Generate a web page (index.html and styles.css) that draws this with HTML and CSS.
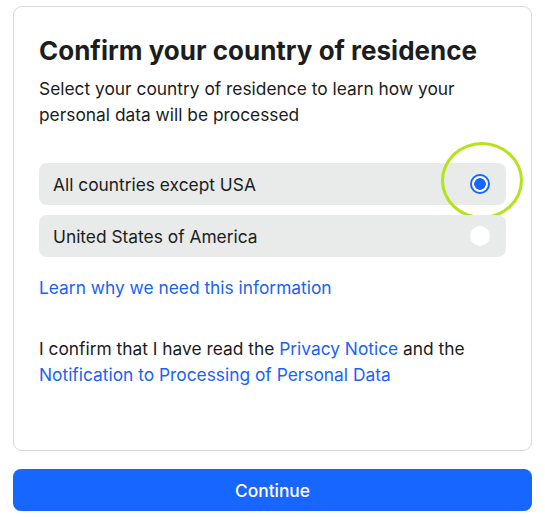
FILE: index.html
```html
<!DOCTYPE html>
<html>
<head>
<meta charset="utf-8">
<link rel="stylesheet" href="styles.css">
</head>
<body>
<div class="page">
  <div class="card">
    <h1 class="title">Confirm your country of residence</h1>
    <p class="sub">Select your country of residence to learn how your personal data will be processed</p>
    <div class="options">
      <div class="option">
        <span class="label">All countries except USA</span>
        <span class="radio checked"></span>
        <span class="highlight"></span>
      </div>
      <div class="option">
        <span class="label">United States of America</span>
        <span class="radio"></span>
      </div>
    </div>
    <a class="link learn" href="#">Learn why we need this information</a>
    <p class="confirm">I confirm that I have read the <a class="link" href="#">Privacy Notice</a> and the <a class="link" href="#">Notification to Processing of Personal Data</a></p>
  </div>
  <button class="btn">Continue</button>
</div>
</body>
</html>
```
FILE: styles.css
```css
html, body { margin: 0; padding: 0; background: #fff; }
body { font-family: Inter, "Noto Sans", sans-serif; color: #1b1d21; }
.page { padding: 6px 13px 0 13px; display: flex; flex-direction: column; gap: 18px; }
.card {
  border: 1px solid #d9dadb; border-radius: 9px; padding: 28px 25px 0 25px;
  height: 445px; box-sizing: border-box; display: flex; flex-direction: column;
}
.title { margin: 0; font-size: 26px; line-height: 32px; font-weight: 700; letter-spacing: 0; }
.sub { margin: 9px 0 0; font-size: 17.35px; line-height: 26px; }
.options { margin-top: 35px; display: flex; flex-direction: column; gap: 10px; }
.option {
  position: relative; height: 42px; background: #e9eaea; border-radius: 8px;
  display: flex; align-items: center; justify-content: space-between; padding: 0 16px 0 14px;
  font-size: 17.35px;
}
.radio { width: 20px; height: 20px; border-radius: 50%; background: #fff; box-sizing: border-box; }
.radio.checked { border: 2px solid #1766ff; background: radial-gradient(circle, #1766ff 0 5.5px, #fff 6px); }
.highlight {
  position: absolute; left: 402px; top: -21px; width: 82px; height: 77px;
  border: 3px solid #b4e31c; border-radius: 50%; box-sizing: border-box; pointer-events: none;
}
.link { color: #1a63f5; text-decoration: none; }
.learn { margin-top: 18px; font-size: 17.35px; line-height: 26px; }
.confirm { margin: 35px 0 0; font-size: 17.35px; line-height: 26px; }
.btn {
  height: 42px; border: 0; border-radius: 8px; background: #1766ff; color: #fff;
  font-family: Inter, sans-serif; font-size: 17.35px; font-weight: 500;
}
```
